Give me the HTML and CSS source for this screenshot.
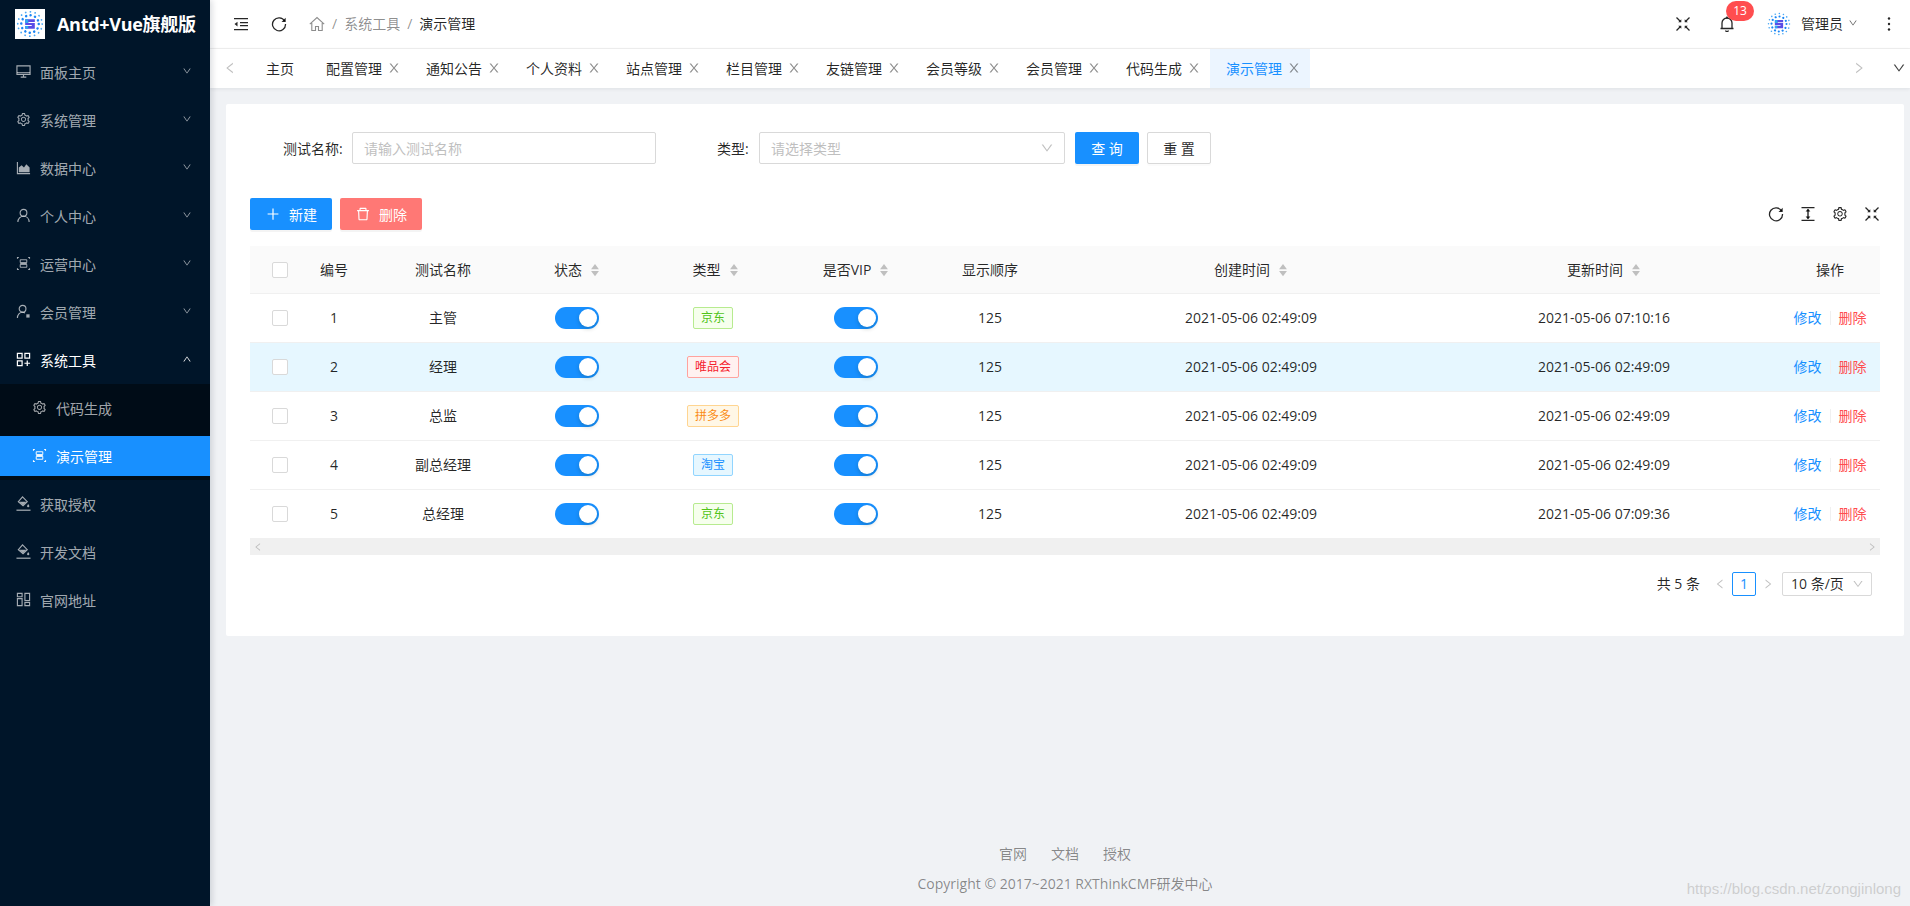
FILE: index.html
```html
<!DOCTYPE html>
<html lang="zh-CN">
<head>
<meta charset="utf-8">
<title>演示管理</title>
<link rel="stylesheet" href="styles.css">
</head>
<body>
<svg class="defs" xmlns="http://www.w3.org/2000/svg">
  <symbol id="i-down" viewBox="0 0 1024 1024"><path d="M884 256h-75c-5.1 0-9.9 2.5-12.9 6.6L512 654.2 227.9 262.6c-3-4.1-7.8-6.6-12.9-6.6h-75c-6.5 0-10.3 7.4-6.5 12.7l352.6 486.1c12.8 17.6 39 17.6 51.7 0l352.6-486.1c3.9-5.3.1-12.7-6.4-12.7z"/></symbol>
  <symbol id="i-up" viewBox="0 0 1024 1024"><path d="M890.5 755.3L537.9 269.2c-12.8-17.6-39-17.6-51.7 0L133.5 755.3A8 8 0 00140 768h75c5.1 0 9.9-2.5 12.9-6.6L512 369.8l284.1 391.6c3 4.1 7.8 6.6 12.9 6.6h75c6.5 0 10.3-7.4 6.5-12.7z"/></symbol>
  <symbol id="i-left" viewBox="0 0 1024 1024"><path d="M724 218.3V141c0-6.7-7.7-10.4-12.9-6.3L260.3 486.8a31.86 31.86 0 000 50.3l450.8 352.1c5.3 4.1 12.9.4 12.9-6.3v-77.3c0-4.9-2.3-9.6-6.1-12.6l-360-281 360-281.1c3.8-3 6.1-7.7 6.1-12.6z"/></symbol>
  <symbol id="i-right" viewBox="0 0 1024 1024"><path d="M765.7 486.8L314.9 134.7A7.97 7.97 0 00302 141v77.3c0 4.9 2.3 9.6 6.1 12.6l360 281.1-360 281.1c-3.9 3-6.1 7.7-6.1 12.6V883c0 6.7 7.7 10.4 12.9 6.3l450.8-352.1a31.96 31.96 0 000-50.4z"/></symbol>
  <symbol id="i-close" viewBox="0 0 1024 1024"><path d="M563.8 512l262.5-312.9c4.4-5.2.7-13.1-6.1-13.1h-79.8c-4.7 0-9.2 2.1-12.3 5.7L511.6 449.8 295.1 191.7c-3-3.6-7.5-5.7-12.3-5.7H203c-6.8 0-10.5 7.9-6.1 13.1L459.4 512 196.9 824.9A7.95 7.95 0 00203 838h79.8c4.7 0 9.2-2.1 12.3-5.7l216.5-258.1 216.5 258.1c3 3.6 7.5 5.7 12.3 5.7h79.8c6.8 0 10.5-7.9 6.1-13.1L563.8 512z"/></symbol>
  <symbol id="i-plus" viewBox="0 0 1024 1024"><path d="M482 152h60q8 0 8 8v704q0 8-8 8h-60q-8 0-8-8V160q0-8 8-8z"/><path d="M176 474h672q8 0 8 8v60q0 8-8 8H176q-8 0-8-8v-60q0-8 8-8z"/></symbol>
  <symbol id="i-delete" viewBox="0 0 1024 1024"><path d="M360 184h-8c4.4 0 8-3.6 8-8v8h304v-8c0 4.4 3.6 8 8 8h-8v72h72v-80c0-35.3-28.7-64-64-64H352c-35.3 0-64 28.7-64 64v80h72v-72zm504 72H160c-17.7 0-32 14.3-32 32v32c0 4.4 3.6 8 8 8h60.4l24.7 523c1.6 34.1 29.8 61 63.9 61h454c34.2 0 62.3-26.8 63.9-61l24.7-523H888c4.4 0 8-3.6 8-8v-32c0-17.7-14.3-32-32-32zM731.3 840H292.7l-24.2-512h487l-24.2 512z"/></symbol>
  <symbol id="i-setting" viewBox="0 0 1024 1024"><path d="M924.8 625.7l-65.5-56c3.1-19 4.7-38.4 4.7-57.8s-1.6-38.8-4.7-57.8l65.5-56a32.03 32.03 0 009.3-35.2l-.9-2.6a443.74 443.74 0 00-79.7-137.9l-1.8-2.1a32.12 32.12 0 00-35.1-9.5l-81.3 28.9c-30-24.6-63.5-44-99.7-57.6l-15.7-85a32.05 32.05 0 00-25.8-25.7l-2.7-.5c-52.1-9.4-106.9-9.4-159 0l-2.7.5a32.05 32.05 0 00-25.8 25.7l-15.8 85.4a351.86 351.86 0 00-99 57.4l-81.9-29.1a32 32 0 00-35.1 9.5l-1.8 2.1a446.02 446.02 0 00-79.7 137.9l-.9 2.6c-4.5 12.5-.8 26.5 9.3 35.2l66.3 56.6c-3.1 18.8-4.6 38-4.6 57.1 0 19.2 1.5 38.4 4.6 57.1L99 625.5a32.03 32.03 0 00-9.3 35.2l.9 2.6c18.1 50.4 44.9 96.9 79.7 137.9l1.8 2.1a32.12 32.12 0 0035.1 9.5l81.9-29.1c29.8 24.5 63.1 43.9 99 57.4l15.8 85.4a32.05 32.05 0 0025.8 25.7l2.7.5a449.4 449.4 0 00159 0l2.7-.5a32.05 32.05 0 0025.8-25.7l15.7-85a350 350 0 0099.7-57.6l81.3 28.9a32 32 0 0035.1-9.5l1.8-2.1c34.8-41.1 61.6-87.5 79.7-137.9l.9-2.6c4.5-12.3.8-26.3-9.3-35zM788.3 465.9c2.5 15.1 3.8 30.6 3.8 46.1s-1.3 31-3.8 46.1l-6.6 40.1 74.7 63.9a370.03 370.03 0 01-42.6 73.6L721 702.8l-31.4 25.8c-23.9 19.6-50.5 35-79.3 45.8l-38.1 14.3-17.9 97a377.5 377.5 0 01-85 0l-17.9-97.2-37.8-14.5c-28.5-10.8-55-26.2-78.7-45.7l-31.4-25.9-93.4 33.2c-17-22.9-31.2-47.6-42.6-73.6l75.5-64.5-6.5-40c-2.4-14.9-3.7-30.3-3.7-45.5 0-15.3 1.2-30.6 3.7-45.5l6.5-40-75.5-64.5c11.3-26.1 25.6-50.7 42.6-73.6l93.4 33.2 31.4-25.9c23.7-19.5 50.2-34.9 78.7-45.7l37.9-14.3 17.9-97.2c28.1-3.2 56.8-3.2 85 0l17.9 97 38.1 14.3c28.7 10.8 55.4 26.2 79.3 45.8l31.4 25.8 92.8-32.9c17 22.9 31.2 47.6 42.6 73.6L781.8 426l6.5 39.9zM512 326c-97.2 0-176 78.8-176 176s78.8 176 176 176 176-78.8 176-176-78.8-176-176-176zm79.2 255.2A111.6 111.6 0 01512 614c-29.9 0-58-11.7-79.2-32.8A111.6 111.6 0 01400 502c0-29.9 11.7-58 32.8-79.2C454 401.6 482.1 390 512 390c29.9 0 58 11.6 79.2 32.8A111.6 111.6 0 01624 502c0 29.9-11.7 58-32.8 79.2z"/></symbol>
  <symbol id="i-desktop" viewBox="0 0 16 16"><path d="M1 2h14v9H1zM5 14h6M8 11v3" fill="none" stroke="currentColor" stroke-width="1.2"/><path d="M1 9.2h14" stroke="currentColor" stroke-width="1"/></symbol>
  <symbol id="i-area" viewBox="0 0 16 16"><path d="M1.5 2v12.5H15" fill="none" stroke="currentColor" stroke-width="1.2"/><path d="M3 13V8l3-2.5 2.5 2.5L11 4.500l3.500 3.500v5z"/></symbol>
  <symbol id="i-user" viewBox="0 0 16 16"><circle cx="8" cy="5" r="3.6" fill="none" stroke="currentColor" stroke-width="1.2"/><path d="M2 15c0-3.6 2.6-6.2 6-6.2s6 2.6 6 6.2" fill="none" stroke="currentColor" stroke-width="1.2"/></symbol>
  <symbol id="i-useradd" viewBox="0 0 16 16"><circle cx="7" cy="5" r="3.6" fill="none" stroke="currentColor" stroke-width="1.2"/><path d="M1.5 15c0-3.6 2.4-6.2 5.5-6.2 1 0 1.8.2 2.6.7" fill="none" stroke="currentColor" stroke-width="1.2"/><path d="M11 11h3.5v3.5H11z"/></symbol>
  <symbol id="i-scan" viewBox="0 0 16 16"><path d="M1 1h2v1.2H2.200V3H1zM13 1h2v2h-1.200v-.8H13zM1 13h1.200v.8H3V15H1zM13.800 13H15v2h-2v-1.200h.8z"/><path d="M4.500 4h7v3h-7zM4.500 9h7v3h-7z" fill="none" stroke="currentColor" stroke-width="1"/><path d="M4.500 8h7" stroke="currentColor" stroke-width="1"/></symbol>
  <symbol id="i-appstore" viewBox="0 0 16 16"><path d="M1.500 1.500h5v5h-5zM9.500 1.500h5v5h-5zM1.500 9.500h5v5h-5z" fill="none" stroke="currentColor" stroke-width="1.300"/><path d="M12 9v6M9 12h6" stroke="currentColor" stroke-width="1.300"/></symbol>
  <symbol id="i-bucket" viewBox="0 0 16 16"><path d="M7 1l5 5-4.500 4.500L2.500 6z" fill="none" stroke="currentColor" stroke-width="1.200"/><path d="M3.500 6h7.500l-3.500 3.800zM13 8.500c.8 1.100 1.200 1.800 1.200 2.300a1.200 1.200 0 01-2.400 0c0-.5.400-1.200 1.200-2.300z"/><path d="M.5 14.500h15v1.300H.5z"/></symbol>
  <symbol id="i-layout" viewBox="0 0 16 16"><path d="M1.500 1.500h5v3.500h-5zM1.500 7h5v7.500h-5zM9.500 1.500h5v7.500h-5zM9.500 11h5v3.500h-5z" fill="none" stroke="currentColor" stroke-width="1.200"/></symbol>
  <symbol id="i-indent" viewBox="0 0 16 16"><path d="M1 2h14v1.200H1zM7 6h8v1.200H7zM7 9h8v1.200H7zM1 13h14v1.200H1zM1.500 8.100L4.500 5.800v4.600z"/></symbol>
  <symbol id="i-reload" viewBox="0 0 16 16"><path d="M13.600 5A6.500 6.500 0 1 0 14.500 8" fill="none" stroke="currentColor" stroke-width="1.300"/><path d="M14.700 1.800v4.200h-4.200z"/></symbol>
  <symbol id="i-home" viewBox="0 0 16 16"><path d="M.8 8.200L8 1.500l7.200 6.700M2.800 7v7.500h3.700v-4h3v4h3.700V7" fill="none" stroke="currentColor" stroke-width="1.100"/></symbol>
  <symbol id="i-full" viewBox="0 0 16 16"><path d="M1.500 1.500L5 5M14.500 1.500L11 5M1.500 14.500L5 11M14.500 14.500L11 11" fill="none" stroke="currentColor" stroke-width="1.300"/><path d="M6.300 6.300V3.200L3.200 6.300zM9.700 6.300V3.200l3.100 3.100zM6.300 9.700v3.100L3.200 9.700zM9.700 9.700v3.100l3.100-3.100z"/></symbol>
  <symbol id="i-bell" viewBox="0 0 16 16"><path d="M3 12.500V7a5 5 0 0 1 10 0v5.500M1.500 12.500h13M6.500 14.500a1.600 1.600 0 0 0 3 0" fill="none" stroke="currentColor" stroke-width="1.300"/><path d="M7.300.5h1.400V2.500H7.300z"/></symbol>
  <symbol id="i-height" viewBox="0 0 16 16"><path d="M1.500 1h13v1.300h-13zM1.500 13.700h13V15h-13zM7.300 3.600v8.800h1.400V3.600z"/><path d="M8 2.800l2.400 2.800H5.600zM8 13.200l2.400-2.800H5.600z"/></symbol>
  <symbol id="i-kebab" viewBox="0 0 16 16"><circle cx="8" cy="2.500" r="1.200"/><circle cx="8" cy="8" r="1.200"/><circle cx="8" cy="13.500" r="1.200"/></symbol>
  <symbol id="i-sort" viewBox="0 0 10 16"><path d="M5 1l4.500 6H.5zM5 15L.5 9h9z"/></symbol>
  <symbol id="i-logo" viewBox="0 0 32 32">
    <circle cx="16" cy="16" r="14" fill="none" stroke="#4aa8f5" stroke-width="2" stroke-linecap="round" stroke-dasharray="0.100 5.400"/>
    <circle cx="16" cy="16" r="10" fill="none" stroke="#1b86f5" stroke-width="2.800" stroke-linecap="round" stroke-dasharray="0.100 5.180"/>
    <path d="M10.500 10.500h11v3.300h-7.500v1h7.500v6.700h-11v-3.300h7.500v-1h-7.500z" fill="#5a4de6"/>
    <path d="M10.500 10.500h3.500v4.300h-3.500zM10.500 18.200h3.500v3.300h-3.500z" fill="#2fa8f0"/>
  </symbol>
</svg>

<div class="app">
  <aside class="sider">
    <div class="brand">
      <span class="brand-logo"><svg class="logo-mark"><use href="#i-logo"/></svg></span>
      <span class="brand-title">Antd+Vue旗舰版</span>
    </div>
    <nav class="menu">
      <a class="menu-item"><svg class="ico-menu"><use href="#i-desktop"/></svg><span class="menu-label">面板主页</span><svg class="ico-arrow"><use href="#i-down"/></svg></a>
      <a class="menu-item"><svg class="ico-menu"><use href="#i-setting"/></svg><span class="menu-label">系统管理</span><svg class="ico-arrow"><use href="#i-down"/></svg></a>
      <a class="menu-item"><svg class="ico-menu"><use href="#i-area"/></svg><span class="menu-label">数据中心</span><svg class="ico-arrow"><use href="#i-down"/></svg></a>
      <a class="menu-item"><svg class="ico-menu"><use href="#i-user"/></svg><span class="menu-label">个人中心</span><svg class="ico-arrow"><use href="#i-down"/></svg></a>
      <a class="menu-item"><svg class="ico-menu"><use href="#i-scan"/></svg><span class="menu-label">运营中心</span><svg class="ico-arrow"><use href="#i-down"/></svg></a>
      <a class="menu-item"><svg class="ico-menu"><use href="#i-useradd"/></svg><span class="menu-label">会员管理</span><svg class="ico-arrow"><use href="#i-down"/></svg></a>
      <a class="menu-item is-open"><svg class="ico-menu"><use href="#i-appstore"/></svg><span class="menu-label">系统工具</span><svg class="ico-arrow"><use href="#i-up"/></svg></a>
      <div class="submenu">
        <a class="sub-item"><svg class="ico-menu"><use href="#i-setting"/></svg><span class="menu-label">代码生成</span></a>
        <a class="sub-item is-active"><svg class="ico-menu"><use href="#i-scan"/></svg><span class="menu-label">演示管理</span></a>
      </div>
      <a class="menu-item"><svg class="ico-menu"><use href="#i-bucket"/></svg><span class="menu-label">获取授权</span></a>
      <a class="menu-item"><svg class="ico-menu"><use href="#i-bucket"/></svg><span class="menu-label">开发文档</span></a>
      <a class="menu-item"><svg class="ico-menu"><use href="#i-layout"/></svg><span class="menu-label">官网地址</span></a>
    </nav>
  </aside>

  <main class="main">
    <header class="topbar">
      <svg class="ico-top"><use href="#i-indent"/></svg>
      <svg class="ico-top"><use href="#i-reload"/></svg>
      <nav class="crumbs">
        <svg class="ico-home"><use href="#i-home"/></svg>
        <span class="crumb-sep">/</span>
        <span class="crumb">系统工具</span>
        <span class="crumb-sep">/</span>
        <span class="crumb-now">演示管理</span>
      </nav>
      <div class="top-right">
        <svg class="ico-full"><use href="#i-full"/></svg>
        <span class="bell"><svg class="ico-top"><use href="#i-bell"/></svg><span class="badge">13</span></span>
        <svg class="avatar"><use href="#i-logo"/></svg>
        <span class="user-name">管理员</span>
        <svg class="ico-user-arrow"><use href="#i-down"/></svg>
        <svg class="ico-kebab"><use href="#i-kebab"/></svg>
      </div>
    </header>

    <div class="tabs">
      <span class="tab-nav"><svg class="ico-nav is-dim"><use href="#i-left"/></svg></span>
      <div class="tab-list">
        <span class="tab tab-home">主页</span>
        <span class="tab">配置管理<svg class="ico-close"><use href="#i-close"/></svg></span>
        <span class="tab">通知公告<svg class="ico-close"><use href="#i-close"/></svg></span>
        <span class="tab">个人资料<svg class="ico-close"><use href="#i-close"/></svg></span>
        <span class="tab">站点管理<svg class="ico-close"><use href="#i-close"/></svg></span>
        <span class="tab">栏目管理<svg class="ico-close"><use href="#i-close"/></svg></span>
        <span class="tab">友链管理<svg class="ico-close"><use href="#i-close"/></svg></span>
        <span class="tab">会员等级<svg class="ico-close"><use href="#i-close"/></svg></span>
        <span class="tab">会员管理<svg class="ico-close"><use href="#i-close"/></svg></span>
        <span class="tab">代码生成<svg class="ico-close"><use href="#i-close"/></svg></span>
        <span class="tab is-active">演示管理<svg class="ico-close"><use href="#i-close"/></svg></span>
      </div>
      <span class="tab-nav-right"><svg class="ico-nav is-dim"><use href="#i-right"/></svg></span>
      <span class="tab-more"><svg class="ico-nav"><use href="#i-down"/></svg></span>
    </div>

    <section class="content">
      <div class="card">
        <form class="search">
          <label class="field-label">测试名称:</label>
          <div class="input"><span class="placeholder">请输入测试名称</span></div>
          <label class="field-label field-label-2">类型:</label>
          <div class="input input-select"><span class="placeholder">请选择类型</span><svg class="ico-select"><use href="#i-down"/></svg></div>
          <span class="btn btn-primary btn-query">查 询</span>
          <span class="btn btn-default">重 置</span>
        </form>

        <div class="toolbar">
          <div class="toolbar-left">
            <span class="btn btn-primary btn-icon"><svg class="ico-btn"><use href="#i-plus"/></svg>新建</span>
            <span class="btn btn-danger btn-icon"><svg class="ico-btn"><use href="#i-delete"/></svg>删除</span>
          </div>
          <div class="toolbar-right">
            <svg class="ico-tool"><use href="#i-reload"/></svg>
            <svg class="ico-tool"><use href="#i-height"/></svg>
            <svg class="ico-tool"><use href="#i-setting"/></svg>
            <svg class="ico-tool"><use href="#i-full"/></svg>
          </div>
        </div>

        <div class="table-wrap">
          <table class="table">
            <colgroup>
              <col class="c1"><col class="c2"><col class="c3"><col class="c4"><col class="c5"><col class="c6"><col class="c7"><col class="c8"><col class="c9"><col class="c10">
            </colgroup>
            <thead>
              <tr>
                <th><span class="check"></span></th>
                <th>编号</th>
                <th>测试名称</th>
                <th>状态<svg class="ico-sort"><use href="#i-sort"/></svg></th>
                <th class="th-type">类型<svg class="ico-sort"><use href="#i-sort"/></svg></th>
                <th>是否VIP<svg class="ico-sort"><use href="#i-sort"/></svg></th>
                <th>显示顺序</th>
                <th>创建时间<svg class="ico-sort"><use href="#i-sort"/></svg></th>
                <th>更新时间<svg class="ico-sort"><use href="#i-sort"/></svg></th>
                <th>操作</th>
              </tr>
            </thead>
            <tbody>
              <tr>
                <td><span class="check"></span></td><td>1</td><td>主管</td>
                <td><span class="switch"><span class="knob"></span></span></td>
                <td><span class="tag tag-green">京东</span></td>
                <td><span class="switch"><span class="knob"></span></span></td>
                <td>125</td><td>2021-05-06 02:49:09</td><td>2021-05-06 07:10:16</td>
                <td><a class="act-edit">修改</a><span class="act-div"></span><a class="act-del">删除</a></td>
              </tr>
              <tr class="is-hover">
                <td><span class="check"></span></td><td>2</td><td>经理</td>
                <td><span class="switch"><span class="knob"></span></span></td>
                <td><span class="tag tag-red">唯品会</span></td>
                <td><span class="switch"><span class="knob"></span></span></td>
                <td>125</td><td>2021-05-06 02:49:09</td><td>2021-05-06 02:49:09</td>
                <td><a class="act-edit">修改</a><span class="act-div"></span><a class="act-del">删除</a></td>
              </tr>
              <tr>
                <td><span class="check"></span></td><td>3</td><td>总监</td>
                <td><span class="switch"><span class="knob"></span></span></td>
                <td><span class="tag tag-orange">拼多多</span></td>
                <td><span class="switch"><span class="knob"></span></span></td>
                <td>125</td><td>2021-05-06 02:49:09</td><td>2021-05-06 02:49:09</td>
                <td><a class="act-edit">修改</a><span class="act-div"></span><a class="act-del">删除</a></td>
              </tr>
              <tr>
                <td><span class="check"></span></td><td>4</td><td>副总经理</td>
                <td><span class="switch"><span class="knob"></span></span></td>
                <td><span class="tag tag-blue">淘宝</span></td>
                <td><span class="switch"><span class="knob"></span></span></td>
                <td>125</td><td>2021-05-06 02:49:09</td><td>2021-05-06 02:49:09</td>
                <td><a class="act-edit">修改</a><span class="act-div"></span><a class="act-del">删除</a></td>
              </tr>
              <tr>
                <td><span class="check"></span></td><td>5</td><td>总经理</td>
                <td><span class="switch"><span class="knob"></span></span></td>
                <td><span class="tag tag-green">京东</span></td>
                <td><span class="switch"><span class="knob"></span></span></td>
                <td>125</td><td>2021-05-06 02:49:09</td><td>2021-05-06 07:09:36</td>
                <td><a class="act-edit">修改</a><span class="act-div"></span><a class="act-del">删除</a></td>
              </tr>
            </tbody>
          </table>
        </div>
        <div class="hscroll">
          <svg class="ico-scroll"><use href="#i-left"/></svg>
          <svg class="ico-scroll"><use href="#i-right"/></svg>
        </div>

        <div class="pager">
          <span class="pager-total">共 5 条</span>
          <svg class="ico-page"><use href="#i-left"/></svg>
          <span class="page-num">1</span>
          <svg class="ico-page"><use href="#i-right"/></svg>
          <span class="page-size">10 条/页<svg class="ico-size"><use href="#i-down"/></svg></span>
        </div>
      </div>
    </section>

    <footer class="footer">
      <div class="footer-links"><a>官网</a><a>文档</a><a>授权</a></div>
      <div class="footer-copy">Copyright © 2017~2021 RXThinkCMF研发中心</div>
    </footer>
  </main>
</div>
<div class="watermark">https://blog.csdn.net/zongjinlong</div>
</body>
</html>
```

FILE: styles.css
```css
* { box-sizing: border-box; }
html, body { margin: 0; height: 100%; }
body {
  font-family: "Open Sans", "Noto Sans CJK SC", sans-serif;
  font-size: 14px;
  line-height: 22px;
  color: rgba(0, 0, 0, .85);
  background: #f0f2f5;
  overflow: hidden;
}
svg { fill: currentColor; flex: none; display: block; }
.defs { display: none; }
a { text-decoration: none; color: inherit; }

.app { display: flex; height: 906px; }

/* sidebar */
.sider {
  width: 210px;
  flex: none;
  background: #001529;
  color: rgba(255, 255, 255, .65);
  box-shadow: 2px 0 6px rgba(0, 21, 41, .15);
  position: relative;
  z-index: 2;
}
.brand { height: 48px; display: flex; align-items: center; padding-left: 15px; }
.brand-logo { width: 30px; height: 30px; background: #fff; display: flex; align-items: center; justify-content: center; }
.logo-mark { width: 28px; height: 28px; }
.brand-title { margin-left: 12px; color: #fff; font-size: 18px; font-weight: 700; letter-spacing: -.3px; white-space: nowrap; }
.menu { display: flex; flex-direction: column; padding-top: 4px; }
.menu-item {
  height: 40px;
  margin-bottom: 8px;
  display: flex;
  align-items: center;
  padding-left: 16px;
}
.menu-item.is-open { color: #fff; margin-bottom: 4px; }
.ico-menu { width: 15px; height: 15px; margin-top: -2px; }
.menu-label { margin-left: 9px; padding-top: 2px; }
.ico-arrow { width: 10px; height: 10px; margin-left: auto; margin-right: 18px; margin-top: -3px; }
.submenu { background: #000c17; padding-top: 4px; margin-bottom: 4px; padding-bottom: 4px; }
.sub-item {
  height: 40px;
  margin-bottom: 8px;
  display: flex;
  align-items: center;
  padding-left: 32px;
}
.sub-item:last-child { margin-bottom: 0; }
.sub-item.is-active { background: #1890ff; color: #fff; }

/* main */
.main { flex: 1; min-width: 0; display: flex; flex-direction: column; }
.topbar {
  height: 49px;
  flex: none;
  background: #fff;
  border-bottom: 1px solid #f0f0f0;
  display: flex;
  align-items: center;
  padding-left: 23px;
}
.ico-top { width: 16px; height: 16px; color: rgba(0, 0, 0, .85); }
.topbar > .ico-top { margin-right: 22px; }
.crumbs { display: flex; align-items: center; }
.ico-home { width: 16px; height: 16px; color: rgba(0, 0, 0, .45); }
.crumb-sep { color: rgba(0, 0, 0, .45); margin: 0 7px; }
.crumb { color: rgba(0, 0, 0, .45); }
.crumb-now { color: rgba(0, 0, 0, .85); }
.top-right { margin-left: auto; display: flex; align-items: center; }
.ico-full { width: 16px; height: 16px; color: rgba(0, 0, 0, .85); }
.bell { position: relative; margin-left: 28px; }
.badge {
  position: absolute;
  left: 7px;
  top: -15px;
  min-width: 28px;
  height: 20px;
  border-radius: 10px;
  background: #ff4d4f;
  color: #fff;
  font-size: 12px;
  line-height: 20px;
  text-align: center;
}
.avatar { width: 24px; height: 24px; margin-left: 32px; }
.user-name { margin-left: 10px; }
.ico-user-arrow { width: 10px; height: 10px; margin-left: 5px; color: rgba(0, 0, 0, .65); margin-top: -2px; }
.ico-kebab { width: 16px; height: 16px; margin-left: 23px; margin-right: 13px; }

/* tabs */
.tabs {
  height: 39px;
  flex: none;
  background: #fff;
  display: flex;
  align-items: stretch;
  box-shadow: 0 1px 4px rgba(0, 21, 41, .08);
  position: relative;
  z-index: 1;
}
.tab-nav { width: 40px; display: flex; align-items: center; padding-left: 13px; }
.tab-list { display: flex; }
.tab-nav-right { margin-left: auto; width: 40px; display: flex; align-items: center; }
.tab-more { width: 16px; display: flex; align-items: center; margin-right: 2px; }
.ico-nav { width: 14px; height: 14px; color: rgba(0, 0, 0, .75); margin-top: -2px; }
.ico-nav.is-dim { color: rgba(0, 0, 0, .25); }
.tab { width: 100px; padding-left: 16px; display: flex; align-items: center; white-space: nowrap; }
.tab-home { width: 60px; }
.tab.is-active { background: #ecf5ff; color: #1890ff; }
.ico-close { width: 14px; height: 14px; margin-left: 5px; color: rgba(0, 0, 0, .45); margin-top: -2px; }

/* content */
.content { padding: 16px 6px 0 16px; }
.card { background: #fff; border-radius: 2px; padding: 28px 24px 40px; height: 532px; }
.search { display: flex; align-items: center; height: 32px; margin: 0; padding-left: 33px; }
.field-label { width: 69px; flex: none; padding-top: 2px; white-space: nowrap; }
.field-label-2 { width: 42px; margin-left: 61px; }
.input {
  width: 304px;
  height: 32px;
  border: 1px solid #d9d9d9;
  border-radius: 2px;
  padding-left: 11px;
  display: flex;
  align-items: center;
}
.input-select { width: 306px; }
.placeholder { color: #bfbfbf; padding-top: 2px; }
.ico-select { width: 14px; height: 14px; margin-left: auto; margin-right: 10px; color: rgba(0, 0, 0, .25); }
.btn {
  height: 32px;
  width: 64px;
  border-radius: 2px;
  display: inline-flex;
  align-items: center;
  justify-content: center;
  border: 1px solid transparent;
  padding-top: 2px;
}
.btn-primary { background: #1890ff; color: #fff; box-shadow: 0 2px 0 rgba(0, 0, 0, .045); }
.btn-danger { background: #ff7875; color: #fff; box-shadow: 0 2px 0 rgba(0, 0, 0, .045); }
.btn-default { background: #fff; border-color: #d9d9d9; margin-left: 8px; box-shadow: 0 2px 0 rgba(0, 0, 0, .015); }
.btn-query { margin-left: 10px; }
.btn-icon { width: 82px; }
.ico-btn { width: 16px; height: 16px; margin-right: 8px; margin-top: -2px; }
.toolbar { display: flex; align-items: center; justify-content: space-between; margin-top: 34px; height: 32px; }
.toolbar-left { display: flex; gap: 8px; }
.toolbar-right { display: flex; gap: 16px; }
.ico-tool { width: 16px; height: 16px; }

/* table */
.table-wrap { margin-top: 16px; overflow: hidden; width: 1630px; }
.table { width: 1636px; table-layout: fixed; border-collapse: separate; border-spacing: 0; }
.c1 { width: 60px; }
.c2 { width: 48px; }
.c3 { width: 170px; }
.c4 { width: 98px; }
.c5 { width: 174px; }
.c6 { width: 112px; }
.c7 { width: 156px; }
.c8 { width: 366px; }
.c9 { width: 340px; }
.c10 { width: 112px; }
th, td { padding: 0; text-align: center; border-bottom: 1px solid #f0f0f0; font-weight: 400; white-space: nowrap; }
th { height: 48px; background: #fafafa; padding-top: 1px; }
td { height: 49px; }
.th-type { padding-left: 5px; }
tr.is-hover td { background: #e6f7ff; }
.check { display: block; width: 16px; height: 16px; margin: 0 auto; border: 1px solid #d9d9d9; border-radius: 2px; background: #fff; }
.ico-sort { display: inline-block; width: 10px; height: 14px; margin-left: 8px; color: #bfbfbf; vertical-align: -2px; }
.switch { display: block; width: 44px; height: 22px; margin: 0 auto; border-radius: 11px; background: #1890ff; position: relative; }
.knob { position: absolute; right: 2px; top: 2px; width: 18px; height: 18px; border-radius: 50%; background: #fff; box-shadow: 0 2px 4px rgba(0, 35, 11, .2); }
.tag { display: inline-block; height: 22px; padding: 0 7px; border: 1px solid; border-radius: 2px; font-size: 12px; line-height: 20px; vertical-align: 1px; }
.tag-green { background: #f6ffed; border-color: #b7eb8f; color: #52c41a; }
.tag-red { background: #fff1f0; border-color: #ffa39e; color: #f5222d; }
.tag-orange { background: #fff7e6; border-color: #ffd591; color: #fa8c16; }
.tag-blue { background: #e6f7ff; border-color: #91d5ff; color: #1890ff; }
.act-edit { color: #1890ff; }
.act-del { color: #ff4d4f; }
.act-div { display: inline-block; width: 1px; height: 14px; background: #f0f0f0; margin: 0 8px; vertical-align: -2px; }
.hscroll { height: 16px; background: #f0f0f0; display: flex; align-items: center; justify-content: space-between; padding: 0 3px; width: 1630px; }
.ico-scroll { width: 10px; height: 10px; color: #bbb; }

/* pager */
.pager { display: flex; align-items: center; justify-content: flex-end; margin-top: 17px; height: 24px; padding-right: 8px; }
.pager-total { margin-right: 14px; }
.ico-page { width: 12px; height: 12px; color: rgba(0, 0, 0, .25); }
.page-num { width: 24px; height: 24px; margin: 0 6px; border: 1px solid #1890ff; border-radius: 2px; color: #1890ff; text-align: center; line-height: 22px; }
.page-size { width: 90px; height: 24px; margin-left: 8px; border: 1px solid #d9d9d9; border-radius: 2px; padding-left: 8px; display: flex; align-items: center; white-space: nowrap; }
.ico-size { width: 12px; height: 12px; margin-left: auto; margin-right: 7px; color: rgba(0, 0, 0, .25); }

/* footer */
.footer { margin-top: auto; padding-left: 10px; padding-bottom: 11px; text-align: center; color: rgba(0, 0, 0, .45); }
.footer-links { display: flex; justify-content: center; gap: 24px; height: 22px; margin-bottom: 8px; }
.footer-copy { height: 22px; }
.watermark {
  position: absolute;
  right: 9px;
  bottom: 6px;
  font-family: "Liberation Sans", sans-serif;
  font-size: 15px;
  line-height: 22px;
  color: rgba(190, 190, 190, .7);
}
```
